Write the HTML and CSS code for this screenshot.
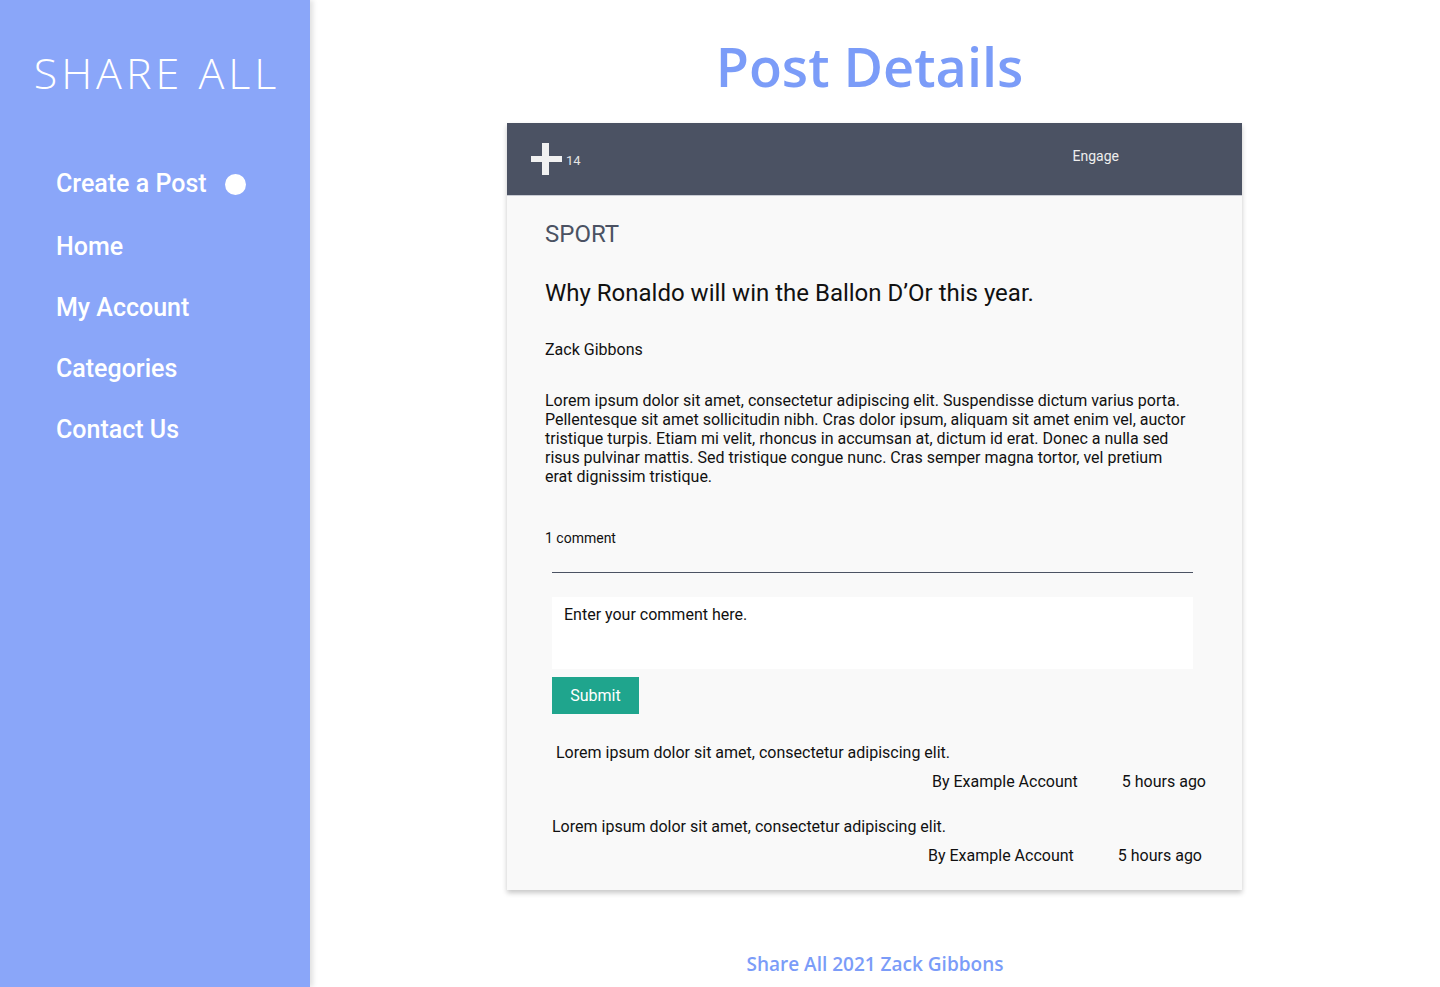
FILE: index.html
```html
<!DOCTYPE html>
<html lang="en">
<head>
<meta charset="utf-8">
<title>Post Details</title>
<link rel="stylesheet" href="styles.css">
</head>
<body>
<div class="layout">
  <aside class="sidebar">
    <div class="logo">SHARE ALL</div>
    <nav class="nav">
      <a class="nav-item" href="#">Create a Post <span class="dot"></span></a>
      <a class="nav-item" href="#">Home</a>
      <a class="nav-item" href="#">My Account</a>
      <a class="nav-item" href="#">Categories</a>
      <a class="nav-item" href="#">Contact Us</a>
    </nav>
  </aside>
  <main class="main">
    <h1 class="page-title">Post Details</h1>
    <section class="card">
      <header class="card-bar">
        <div class="votes">
          <svg class="plus" width="31" height="32" viewBox="0 0 31 32"><rect x="11" y="0" width="7" height="32" fill="#f1f1f1"/><rect x="0" y="13" width="31" height="6" fill="#f1f1f1"/></svg>
          <span class="vote-count">14</span>
        </div>
        <span class="engage">Engage</span>
      </header>
      <div class="card-body">
        <div class="category">SPORT</div>
        <h2 class="headline">Why Ronaldo will win the Ballon D’Or this year.</h2>
        <div class="author">Zack Gibbons</div>
        <p class="content">Lorem ipsum dolor sit amet, consectetur adipiscing elit. Suspendisse dictum varius porta. Pellentesque sit amet sollicitudin nibh. Cras dolor ipsum, aliquam sit amet enim vel, auctor tristique turpis. Etiam mi velit, rhoncus in accumsan at, dictum id erat. Donec a nulla sed risus pulvinar mattis. Sed tristique congue nunc. Cras semper magna tortor, vel pretium erat dignissim tristique.</p>
        <div class="comment-count">1 comment</div>
        <div class="comments">
          <div class="rule"></div>
          <div class="comment-input">Enter your comment here.</div>
          <button class="submit">Submit</button>
          <div class="comment comment-first">
            <div class="comment-text">Lorem ipsum dolor sit amet, consectetur adipiscing elit.</div>
            <div class="comment-meta"><span>By Example Account</span><span>5 hours ago</span></div>
          </div>
          <div class="comment">
            <div class="comment-text">Lorem ipsum dolor sit amet, consectetur adipiscing elit.</div>
            <div class="comment-meta"><span>By Example Account</span><span>5 hours ago</span></div>
          </div>
        </div>
      </div>
    </section>
    <footer class="footer">Share All 2021 Zack Gibbons</footer>
  </main>
</div>
</body>
</html>
```
FILE: styles.css
```css
* { box-sizing: border-box; }
html, body { margin: 0; padding: 0; }
body {
  background: #ffffff;
  font-family: Roboto, "Liberation Sans", sans-serif;
  color: #111;
}
.layout {
  display: flex;
  min-height: 987px;
}
.sidebar {
  width: 310px;
  flex: 0 0 310px;
  background: #8aa6f9;
  box-shadow: 3px 0 5px rgba(0, 0, 0, 0.12);
  position: relative;
  z-index: 1;
}
.logo {
  margin-top: 47px;
  text-align: center;
  color: #fff;
  font-family: "Open Sans", sans-serif;
  font-weight: 300;
  font-size: 43px;
  line-height: 52px;
  letter-spacing: 4px;
  padding-left: 4px;
}
.nav {
  display: flex;
  flex-direction: column;
  margin-top: 71px;
  padding-left: 56px;
}
.nav-item {
  display: flex;
  align-items: center;
  color: #fff;
  text-decoration: none;
  font-size: 25px;
  font-weight: 500;
  line-height: 28px;
  height: 28px;
  margin-bottom: 33px;
}
.nav-item:first-child { margin-bottom: 35px; }
.dot {
  display: inline-block;
  width: 21px;
  height: 21px;
  border-radius: 50%;
  background: #fff;
  margin-left: 18px;
}
.main {
  flex: 1;
  display: flex;
  flex-direction: column;
  align-items: center;
}
.page-title {
  margin: 32px 0 0;
  font-family: "Open Sans", sans-serif;
  font-weight: 600;
  font-size: 54px;
  line-height: 68px;
  color: #7b9cf8;
  letter-spacing: 0;
  padding-right: 11px;
}
.card {
  margin-top: 23px;
  margin-right: 1px;
  width: 735px;
  background: #f9f9f9;
  box-shadow: 0 3px 5px rgba(0, 0, 0, 0.22);
}
.card-bar {
  height: 73px;
  background: #4b5263;
  display: flex;
  align-items: center;
  padding-left: 24px;
  border-bottom: 1px solid #c9ccd4;
}
.votes {
  display: flex;
  align-items: center;
}
.plus { display: block; }
.vote-count {
  margin-left: 4px;
  margin-top: 2px;
  color: #e4e4e4;
  font-size: 13px;
}
.engage {
  margin-left: auto;
  margin-right: 123px;
  margin-top: -6px;
  color: #eeeeee;
  font-size: 14px;
}
.card-body {
  padding: 24px 38px 25px 38px;
}
.category {
  font-size: 24px;
  line-height: 28px;
  color: #4b5263;
}
.headline {
  margin: 31px 0 0;
  font-size: 24px;
  line-height: 28px;
  font-weight: 400;
  color: #111;
}
.author {
  margin-top: 33px;
  font-size: 16px;
  line-height: 19px;
}
.content {
  margin: 32px 0 0;
  font-size: 16px;
  line-height: 19px;
  width: 648px;
}
.comment-count {
  margin-top: 44px;
  font-size: 14px;
  line-height: 16px;
}
.comments {
  margin-left: 7px;
}
.rule {
  margin-top: 26px;
  width: 641px;
  height: 1px;
  background: #4b5263;
}
.comment-input {
  margin-top: 24px;
  width: 641px;
  height: 72px;
  background: #fff;
  padding: 8px 12px;
  font-size: 16px;
  line-height: 19px;
}
.submit {
  display: block;
  margin-top: 8px;
  width: 87px;
  height: 37px;
  border: 0;
  background: #1fa58d;
  color: #fff;
  font-family: Roboto, sans-serif;
  font-size: 16px;
  padding: 0;
}
.comment {
  width: 650px;
  margin-top: 26px;
}
.comment-first {
  margin-top: 29px;
  margin-left: 4px;
}
.comment-text {
  font-size: 16px;
  line-height: 19px;
}
.comment-meta {
  margin-top: 10px;
  display: flex;
  justify-content: flex-end;
  gap: 44px;
  font-size: 16px;
  line-height: 19px;
}
.footer {
  margin-top: 62px;
  font-family: "Open Sans", sans-serif;
  font-weight: 600;
  font-size: 19px;
  line-height: 24px;
  color: #7b9cf8;
}
```
